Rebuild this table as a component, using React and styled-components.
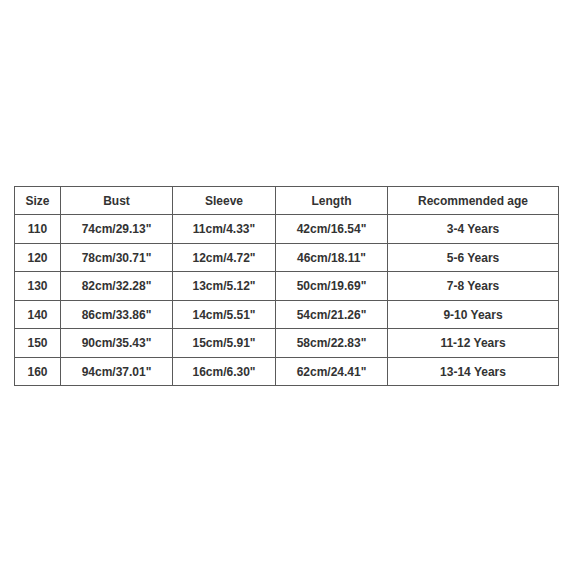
import React from 'react';
import styled, { createGlobalStyle } from 'styled-components';

const Global = createGlobalStyle`
  html, body { margin: 0; padding: 0; background: #fff; }
  body { font-family: "Liberation Sans", Arial, sans-serif; }
`

const Page = styled.div`
  width: 573px;
  height: 573px;
  display: flex;
  align-items: center;
  justify-content: center;
`

const Table = styled.table`
  width: 544px;
  border-collapse: collapse;
  table-layout: fixed;
  margin-top: -1px;
`

const Cell = styled.td`
  border: 1px solid #5a5a5a;
  height: 27.5px;
  padding: 0;
  text-align: center;
  vertical-align: middle;
  font-size: 12px;
  font-weight: bold;
  color: #333;
`

const columns = [
  { title: 'Size', width: 46 },
  { title: 'Bust', width: 112 },
  { title: 'Sleeve', width: 103 },
  { title: 'Length', width: 112 },
  { title: 'Recommended age', width: 171 },
];

const rows = [
  ['110', '74cm/29.13"', '11cm/4.33"', '42cm/16.54"', '3-4 Years'],
  ['120', '78cm/30.71"', '12cm/4.72"', '46cm/18.11"', '5-6 Years'],
  ['130', '82cm/32.28"', '13cm/5.12"', '50cm/19.69"', '7-8 Years'],
  ['140', '86cm/33.86"', '14cm/5.51"', '54cm/21.26"', '9-10 Years'],
  ['150', '90cm/35.43"', '15cm/5.91"', '58cm/22.83"', '11-12 Years'],
  ['160', '94cm/37.01"', '16cm/6.30"', '62cm/24.41"', '13-14 Years'],
];

const App = () => {
  return (
    <Page>
      <Global />
      <Table>
        <colgroup>
          {columns.map(c => <col key={c.title} style={{ width: c.width }} />)}
        </colgroup>
        <tbody>
          <tr>
            {columns.map(c => <Cell key={c.title}>{c.title}</Cell>)}
          </tr>
          {rows.map(r => (
            <tr key={r[0]}>
              {r.map((v, i) => <Cell key={i}>{v}</Cell>)}
            </tr>
          ))}
        </tbody>
      </Table>
    </Page>
  )
}

export default App;
